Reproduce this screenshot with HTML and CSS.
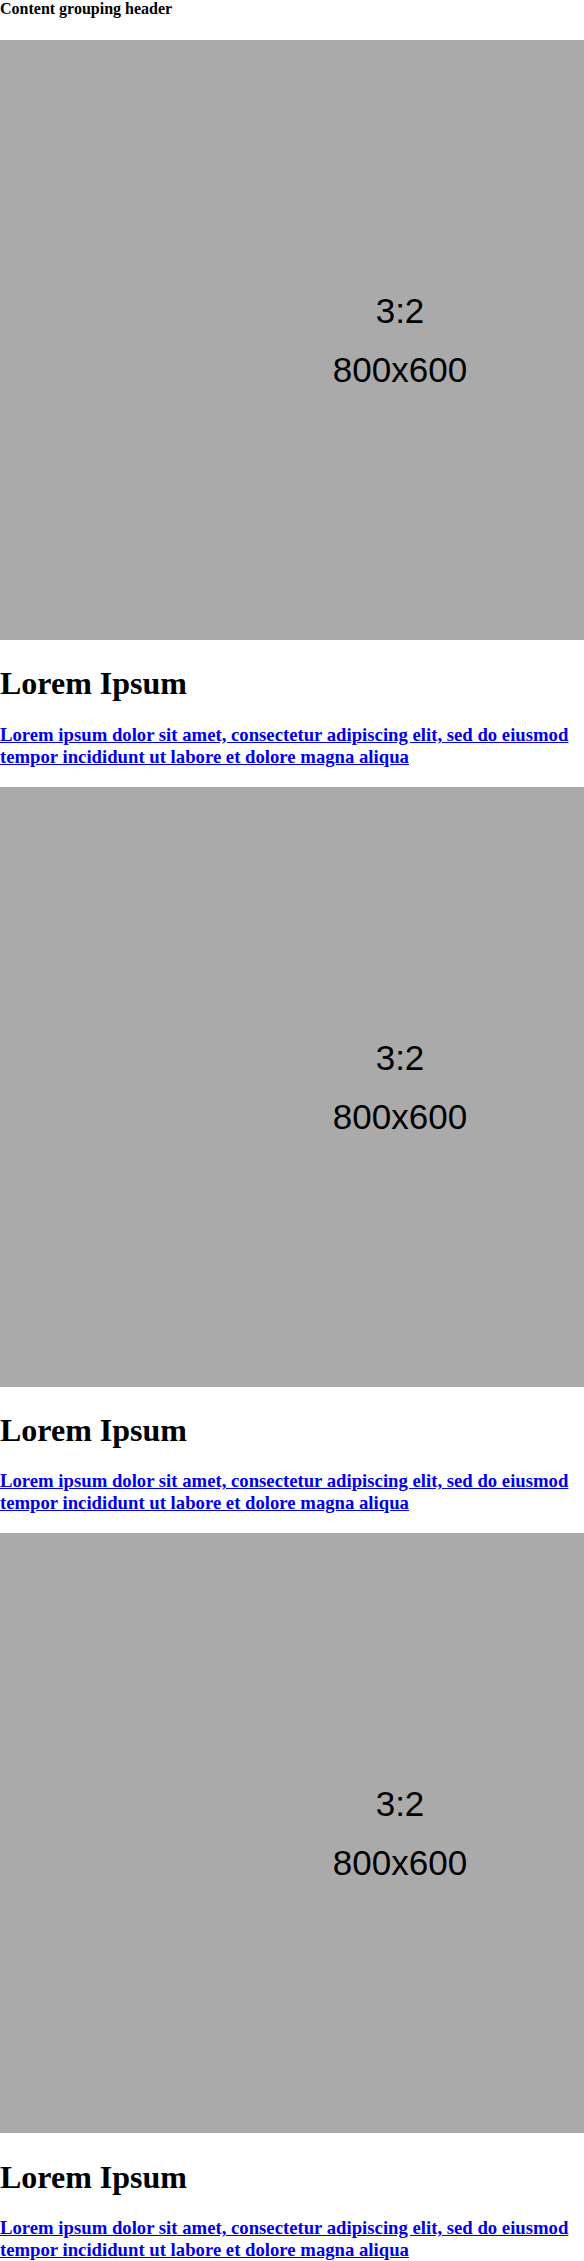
FILE: index.html
```html
<!DOCTYPE html>
<html>
<head>
<meta charset="utf-8">
<link rel="stylesheet" href="styles.css">
</head>
<body>
<div class="group-header">Content grouping header</div>
<div class="list">
  <div class="card">
    <div class="media"><svg class="ph" width="800" height="600" viewBox="0 0 800 600"><rect width="800" height="600" fill="#aaaaaa"/><text x="400" y="282.7" text-anchor="middle">3:2</text><text x="400" y="341.7" text-anchor="middle">800x600</text></svg></div>
    <h1 class="title">Lorem Ipsum</h1>
    <h3 class="desc"><a href="#">Lorem ipsum dolor sit amet, consectetur adipiscing elit, sed do eiusmod tempor incididunt ut labore et dolore magna aliqua</a></h3>
  </div>
  <div class="card">
    <div class="media"><svg class="ph" width="800" height="600" viewBox="0 0 800 600"><rect width="800" height="600" fill="#aaaaaa"/><text x="400" y="282.7" text-anchor="middle">3:2</text><text x="400" y="341.7" text-anchor="middle">800x600</text></svg></div>
    <h1 class="title">Lorem Ipsum</h1>
    <h3 class="desc"><a href="#">Lorem ipsum dolor sit amet, consectetur adipiscing elit, sed do eiusmod tempor incididunt ut labore et dolore magna aliqua</a></h3>
  </div>
  <div class="card">
    <div class="media"><svg class="ph" width="800" height="600" viewBox="0 0 800 600"><rect width="800" height="600" fill="#aaaaaa"/><text x="400" y="282.7" text-anchor="middle">3:2</text><text x="400" y="341.7" text-anchor="middle">800x600</text></svg></div>
    <h1 class="title">Lorem Ipsum</h1>
    <h3 class="desc"><a href="#">Lorem ipsum dolor sit amet, consectetur adipiscing elit, sed do eiusmod tempor incididunt ut labore et dolore magna aliqua</a></h3>
  </div>
</div>
</body>
</html>
```
FILE: styles.css
```css
html, body {
  margin: 0;
  padding: 0;
  background: #fff;
}
body {
  font-family: "Liberation Serif", "Times New Roman", serif;
  font-size: 16px;
  color: #000;
  overflow-x: hidden;
}
.group-header {
  font-size: 16px;
  font-weight: bold;
  line-height: 18.4px;
  margin-bottom: 21.6px;
}
.media {
  width: 100%;
  overflow: hidden;
  white-space: nowrap;
}
.ph {
  display: inline;
  vertical-align: baseline;
}
.ph text {
  font-family: "Liberation Sans", Arial, sans-serif;
  font-size: 35px;
  fill: #000;
}
.title {
  font-size: 32px;
  font-weight: bold;
  margin: 21.44px 0;
}
.desc {
  font-size: 18.72px;
  font-weight: bold;
  margin: 18.72px 0;
}
.desc a {
  color: #0000ee;
  text-decoration: underline;
}
```
